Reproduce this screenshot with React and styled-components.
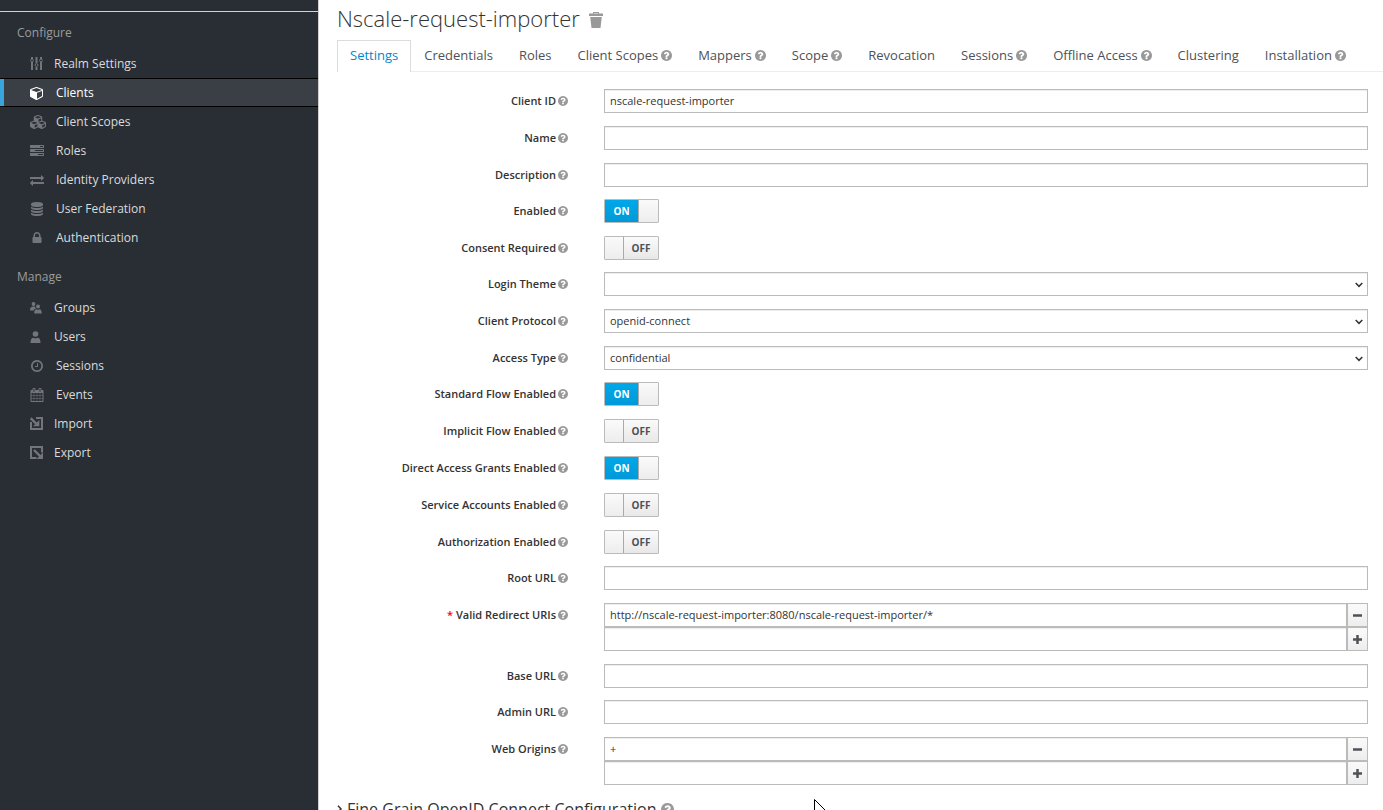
import { useState } from 'react';
import styled, { createGlobalStyle } from 'styled-components';
import { FaCubes } from 'react-icons/fa';

const ICONS = {
    cube: 'M896 1629l640-349v-636l-640 233v752zm-64-865l698-254-698-254-698 254zm832-252v768q0 35-18 65t-49 47l-704 384q-28 16-61 16t-61-16l-704-384q-31-17-49-47t-18-65v-768q0-40 23-73t61-47l704-256q22-8 44-8t44 8l704 256q38 14 61 47t23 73z',
    tasks: 'M1024 1408h640v-128h-640v128zm-384-512h1024v-128h-1024v128zm640-512h384v-128h-384v128zm512 832v256q0 26-19 45t-45 19h-1664q-26 0-45-19t-19-45v-256q0-26 19-45t45-19h1664q26 0 45 19t19 45zm0-512v256q0 26-19 45t-45 19h-1664q-26 0-45-19t-19-45v-256q0-26 19-45t45-19h1664q26 0 45 19t19 45zm0-512v256q0 26-19 45t-45 19h-1664q-26 0-45-19t-19-45v-256q0-26 19-45t45-19h1664q26 0 45 19t19 45z',
    exchange: 'M1792 1184v192q0 13-9.5 22.5t-22.5 9.5h-1376v192q0 13-9.5 22.5t-22.5 9.5q-12 0-24-10l-319-320q-9-9-9-22 0-14 9-23l320-320q9-9 23-9 13 0 22.5 9.5t9.5 22.5v192h1376q13 0 22.5 9.5t9.5 22.5zm0-544q0 14-9 23l-320 320q-9 9-23 9-13 0-22.5-9.5t-9.5-22.5v-192h-1376q-13 0-22.5-9.5t-9.5-22.5v-192q0-13 9.5-22.5t22.5-9.5h1376v-192q0-14 9-23t23-9q12 0 24 10l319 319q9 9 9 23z',
    database: 'M896 768q237 0 443-43t325-127v170q0 69-103 128t-280 93.5-385 34.5-385-34.5-280-93.5-103-128v-170q119 84 325 127t443 43zm0 768q237 0 443-43t325-127v170q0 69-103 128t-280 93.5-385 34.5-385-34.5-280-93.5-103-128v-170q119 84 325 127t443 43zm0-384q237 0 443-43t325-127v170q0 69-103 128t-280 93.5-385 34.5-385-34.5-280-93.5-103-128v-170q119 84 325 127t443 43zm0-1152q208 0 385 34.5t280 93.5 103 128v128q0 69-103 128t-280 93.5-385 34.5-385-34.5-280-93.5-103-128v-128q0-69 103-128t280-93.5 385-34.5z',
    lock: 'M640 768h512v-192q0-106-75-181t-181-75-181 75-75 181v192zm832 96v576q0 40-28 68t-68 28h-960q-40 0-68-28t-28-68v-576q0-40 28-68t68-28h32v-192q0-184 132-316t316-132 316 132 132 316v192h32q40 0 68 28t28 68z',
    clock: 'M1024 544v448q0 14-9 23t-23 9h-320q-14 0-23-9t-9-23v-64q0-14 9-23t23-9h224v-352q0-14 9-23t23-9h64q14 0 23 9t9 23zm416 352q0-148-73-273t-198-198-273-73-273 73-198 198-73 273 73 273 198 198 273 73 273-73 198-198 73-273zm224 0q0 209-103 385.5t-279.5 279.5-385.5 103-385.5-103-279.5-279.5-103-385.5 103-385.5 279.5-279.5 385.5-103 385.5 103 279.5 279.5 103 385.5z',
    calendar: 'M192 1664h288v-288h-288v288zm352 0h320v-288h-320v288zm-352-352h288v-320h-288v320zm352 0h320v-320h-320v320zm-352-384h288v-288h-288v288zm736 736h320v-288h-320v288zm-384-736h320v-288h-320v288zm768 736h288v-288h-288v288zm-384-352h320v-320h-320v320zm-352-864v-288q0-13-9.5-22.5t-22.5-9.5h-64q-13 0-22.5 9.5t-9.5 22.5v288q0 13 9.5 22.5t22.5 9.5h64q13 0 22.5-9.5t9.5-22.5zm736 864h288v-320h-288v320zm-384-384h320v-288h-320v288zm384 0h288v-288h-288v288zm32-480v-288q0-13-9.5-22.5t-22.5-9.5h-64q-13 0-22.5 9.5t-9.5 22.5v288q0 13 9.5 22.5t22.5 9.5h64q13 0 22.5-9.5t9.5-22.5zm384-64v1280q0 52-38 90t-90 38h-1408q-52 0-90-38t-38-90v-1280q0-52 38-90t90-38h128v-96q0-66 47-113t113-47h64q66 0 113 47t47 113v96h384v-96q0-66 47-113t113-47h64q66 0 113 47t47 113v96h128q52 0 90 38t38 90z',
    question: 'M1024 1376v-192q0-14-9-23t-23-9h-192q-14 0-23 9t-9 23v192q0 14 9 23t23 9h192q14 0 23-9t9-23zm256-672q0-88-55.5-163t-138.5-116-170-41q-243 0-371 213-15 24 8 42l132 100q7 6 19 6 16 0 25-12 53-68 86-92 34-24 86-24 48 0 85.5 26t37.5 59q0 38-20 61t-68 45q-63 28-115.5 86.5t-52.5 125.5v36q0 14 9 23t23 9h192q14 0 23-9t9-23q0-19 21.5-49.5t54.5-49.5q32-18 49-28.5t46-35 44.5-48 28-60.5 12.5-81zm384 192q0 209-103 385.5t-279.5 279.5-385.5 103-385.5-103-279.5-279.5-103-385.5 103-385.5 279.5-279.5 385.5-103 385.5 103 279.5 279.5 103 385.5z',
};

const Icon = ({ name, size = 14 }) => (
    <svg width={size} height={size} viewBox='0 0 1792 1792' fill='currentColor' aria-hidden='true'>
        <path d={ICONS[name]} />
    </svg>
);

const HelpIcon = ({ size = 10 }) => (
    <svg width={size} height={size} viewBox='128 128 1536 1536' fill='currentColor' aria-hidden='true'>
        <path d={ICONS.question} />
    </svg>
);

const SlidersIcon = () => (
    <svg width='13' height='13' viewBox='0 0 13 13' fill='none' stroke='currentColor' aria-hidden='true'>
        <path d='M2 0v2M2 5v8M6.500 0v6M6.500 10v3M11 0v2M11 5v8' strokeWidth='2' />
        <circle cx='2' cy='3.500' r='1.400' />
        <circle cx='6.500' cy='8' r='1.400' />
        <circle cx='11' cy='3.500' r='1.400' />
    </svg>
);

const GroupsIcon = () => (
    <svg width='12' height='12' viewBox='0 0 12 12' fill='currentColor' aria-hidden='true'>
        <circle cx='3.500' cy='2' r='1.900' />
        <circle cx='8' cy='4.500' r='2' />
        <path d='M0 8.500c0-2.500 1-4 3-4h2c.5 1.500.7 2 1 2.300C4.700 7 4 7.600 3.800 8.500z' />
        <path d='M4.200 11.500c0-2.800 1-4.300 2.600-4.300L8 8l1.200-.8c1.700 0 2.600 1.500 2.600 4.300z' />
    </svg>
);

const UserIcon = () => (
    <svg width='11' height='12' viewBox='0 0 11 12' fill='currentColor' aria-hidden='true'>
        <circle cx='5.500' cy='3' r='2.800' />
        <path d='M.5 12c0-3.500 1-5.300 3-5.300L5.500 7.500l2-.8c2 0 3 1.800 3 5.300z' />
    </svg>
);

const ImportIcon = () => (
    <svg width='13' height='13' viewBox='0 0 13 13' fill='none' stroke='currentColor' strokeWidth='2' aria-hidden='true'>
        <path d='M1 5v7h11V1H6' />
        <path d='M.7 1.200L7 7.500' strokeWidth='2.400' />
        <path d='M9.300 3v6.300H3z' fill='currentColor' stroke='none' />
    </svg>
);

const ExportIcon = () => (
    <svg width='13' height='13' viewBox='0 0 13 13' fill='none' stroke='currentColor' strokeWidth='2' aria-hidden='true'>
        <path d='M6.500 12H1V1h11v5.500' />
        <path d='M4 4l6.500 6.500' strokeWidth='2.400' />
        <path d='M13 6.500V13H6.500z' fill='currentColor' stroke='none' />
    </svg>
);

const TrashIcon = () => (
    <svg width='14' height='16' viewBox='0 0 14 16' fill='currentColor' aria-hidden='true'>
        <path d='M0 1.500h4V.5Q4 0 4.500 0h5Q10 0 10 .5v1h4V4H0zM5 1v.6h4V1zM1.200 5h11.600l-1.300 11h-9z' />
    </svg>
);

const CONFIGURE = [
    { label: 'Realm Settings', icon: <SlidersIcon />, indent: 24 },
    { label: 'Clients', icon: <Icon name='cube' />, indent: 26, active: true },
    { label: 'Client Scopes', icon: <FaCubes size={16} />, indent: 26 },
    { label: 'Roles', icon: <Icon name='tasks' />, indent: 26 },
    { label: 'Identity Providers', icon: <Icon name='exchange' />, indent: 26 },
    { label: 'User Federation', icon: <Icon name='database' />, indent: 26 },
    { label: 'Authentication', icon: <Icon name='lock' />, indent: 26 },
];

const MANAGE = [
    { label: 'Groups', icon: <GroupsIcon />, indent: 24 },
    { label: 'Users', icon: <UserIcon />, indent: 24 },
    { label: 'Sessions', icon: <Icon name='clock' />, indent: 26 },
    { label: 'Events', icon: <Icon name='calendar' />, indent: 26 },
    { label: 'Import', icon: <ImportIcon />, indent: 24 },
    { label: 'Export', icon: <ExportIcon />, indent: 24 },
];

const TABS = [
    { label: 'Settings', active: true },
    { label: 'Credentials' },
    { label: 'Roles' },
    { label: 'Client Scopes', help: true },
    { label: 'Mappers', help: true },
    { label: 'Scope', help: true },
    { label: 'Revocation' },
    { label: 'Sessions', help: true },
    { label: 'Offline Access', help: true },
    { label: 'Clustering' },
    { label: 'Installation', help: true },
];

const FIELD_GROUPS = [
    [
        { id: 'clientId', label: 'Client ID', type: 'text', value: 'nscale-request-importer' },
        { id: 'name', label: 'Name', type: 'text' },
        { id: 'description', label: 'Description', type: 'text' },
    ],
    [
        { id: 'enabled', label: 'Enabled', type: 'switch', value: true },
        { id: 'consent', label: 'Consent Required', type: 'switch' },
    ],
    [
        { id: 'loginTheme', label: 'Login Theme', type: 'select', options: [''] },
        { id: 'protocol', label: 'Client Protocol', type: 'select', options: ['openid-connect', 'saml'] },
        { id: 'accessType', label: 'Access Type', type: 'select', options: ['confidential', 'public', 'bearer-only'] },
    ],
    [
        { id: 'standardFlow', label: 'Standard Flow Enabled', type: 'switch', value: true },
        { id: 'implicitFlow', label: 'Implicit Flow Enabled', type: 'switch' },
        { id: 'directAccess', label: 'Direct Access Grants Enabled', type: 'switch', value: true },
        { id: 'serviceAccounts', label: 'Service Accounts Enabled', type: 'switch' },
        { id: 'authorization', label: 'Authorization Enabled', type: 'switch' },
    ],
    [
        { id: 'rootUrl', label: 'Root URL', type: 'text' },
        {
            id: 'redirectUris',
            label: 'Valid Redirect URIs',
            type: 'list',
            value: 'http://nscale-request-importer:8080/nscale-request-importer/*',
            required: true,
        },
        { id: 'baseUrl', label: 'Base URL', type: 'text' },
    ],
    [
        { id: 'adminUrl', label: 'Admin URL', type: 'text' },
        { id: 'webOrigins', label: 'Web Origins', type: 'list', value: '+' },
    ],
];

const Switch = ({ id, defaultOn }) => {
    const [on, setOn] = useState(!!defaultOn);

    return (
        <SwitchFrame>
            <SwitchInput id={id} type='checkbox' checked={on} onChange={() => setOn(!on)} />
            {on && <SwitchText $on>ON</SwitchText>}
            <SwitchHandle $on={on} />
            {!on && <SwitchText>OFF</SwitchText>}
        </SwitchFrame>
    );
};

const Select = ({ id, options }) => (
    <SelectWrap>
        <SelectBox id={id}>
            {options.map((option) => (
                <option key={option}>{option}</option>
            ))}
        </SelectBox>
        <SelectArrow width='8' height='6' viewBox='0 0 8 6' aria-hidden='true'>
            <path d='M.7.9L4 4.300 7.300.9' fill='none' stroke='#333' strokeWidth='1.500' />
        </SelectArrow>
    </SelectWrap>
);

const ListField = ({ id, label, value }) => (
    <div>
        <InputGroup>
            <TextInput id={id} type='text' defaultValue={value} />
            <AddonButton type='button' aria-label={`Remove from ${label}`}>
                <svg width='9' height='9' viewBox='0 0 9 9' aria-hidden='true'>
                    <path d='M0 4.500h9' stroke='currentColor' strokeWidth='2.500' />
                </svg>
            </AddonButton>
        </InputGroup>
        <InputGroup>
            <TextInput type='text' aria-label={`New entry for ${label}`} />
            <AddonButton type='button' aria-label={`Add to ${label}`}>
                <svg width='9' height='9' viewBox='0 0 9 9' aria-hidden='true'>
                    <path d='M0 4.500h9M4.500 0v9' stroke='currentColor' strokeWidth='2.500' />
                </svg>
            </AddonButton>
        </InputGroup>
    </div>
);

const Control = ({ field }) => {
    if (field.type === 'switch') return <Switch id={field.id} defaultOn={field.value} />;
    if (field.type === 'select') return <Select id={field.id} options={field.options} />;
    if (field.type === 'list') return <ListField id={field.id} label={field.label} value={field.value} />;
    return <TextInput id={field.id} type='text' defaultValue={field.value} />;
};

const NavSection = ({ title, items }) => (
    <Section>
        <SectionTitle>{title}</SectionTitle>
        <NavList>
            {items.map((item) => (
                <li key={item.label}>
                    <NavLink href='#' $active={item.active}>
                        <NavIcon $width={item.indent}>{item.icon}</NavIcon>
                        {item.label}
                    </NavLink>
                </li>
            ))}
        </NavList>
    </Section>
);

const App = () => (
    <>
        <GlobalStyle />
        <Shell>
            <Sidebar>
                <SidebarTop />
                <NavSection title='Configure' items={CONFIGURE} />
                <NavSection title='Manage' items={MANAGE} />
            </Sidebar>
            <Main>
                <Header>
                    <Title>Nscale-request-importer</Title>
                    <DeleteButton type='button' aria-label='Delete client'>
                        <TrashIcon />
                    </DeleteButton>
                </Header>
                <Tabs>
                    {TABS.map((tab) => (
                        <Tab key={tab.label} href='#' $active={tab.active}>
                            {tab.label}
                            {tab.help && <HelpIcon size={11} />}
                        </Tab>
                    ))}
                </Tabs>
                <Form>
                    {FIELD_GROUPS.map((group) => (
                        <FieldGroup key={group[0].id}>
                            {group.map((field) => (
                                <Row key={field.id}>
                                    <Label htmlFor={field.id}>
                                        <span>
                                            {field.required && <Required>* </Required>}
                                            {field.label}
                                        </span>
                                        <HelpIcon />
                                    </Label>
                                    <Control field={field} />
                                </Row>
                            ))}
                        </FieldGroup>
                    ))}
                    <Legend>
                        <svg width='5' height='8' viewBox='0 0 5 8' aria-hidden='true'>
                            <path d='M1 .7L4 4 1 7.300' fill='none' stroke='currentColor' strokeWidth='1.500' />
                        </svg>
                        Fine Grain OpenID Connect Configuration
                        <HelpIcon size={13} />
                    </Legend>
                </Form>
            </Main>
            <Pointer width='13' height='20' viewBox='0 0 13 20' aria-hidden='true'>
                <path d='M.5.5v16l4-4 2.500 6 2-1-2.500-5.500H12z' fill='#fff' stroke='#000' />
            </Pointer>
        </Shell>
    </>
);

export default App;

const GlobalStyle = createGlobalStyle`
    * {
        box-sizing: border-box;
    }

    body {
        margin: 0;
        background: #fff;
        color: #333;
        font-family: 'Open Sans', sans-serif;
        font-size: 11px;
    }

    button,
    input,
    select {
        font: inherit;
        color: inherit;
    }
`;

const Shell = styled.div`
    position: relative;
    display: flex;
    height: 100vh;
    overflow: hidden;
`;

const Sidebar = styled.nav`
    flex: 0 0 319px;
    background: #292e34;
    border-right: 1px solid #d1d1d1;
`;

const SidebarTop = styled.div`
    height: 12px;
    border-bottom: 1px solid #d1d1d1;
`;

const Section = styled.section`
    padding-top: 12px;
    margin-bottom: 4px;
`;

const SectionTitle = styled.h2`
    margin: 0 0 7px;
    padding-left: 17px;
    color: #9c9c9c;
    font-size: 12px;
    font-weight: 400;
    line-height: 18px;
`;

const NavList = styled.ul`
    margin: 0;
    padding: 0;
    list-style: none;
`;

const NavLink = styled.a`
    display: flex;
    align-items: center;
    height: 29px;
    padding-left: 30px;
    border: solid #000;
    border-width: ${({ $active }) => ($active ? '1px 0' : '0')};
    box-shadow: ${({ $active }) => ($active ? 'inset 4px 0 #39a5dc' : 'none')};
    background: ${({ $active }) => ($active ? '#393f45' : 'transparent')};
    color: ${({ $active }) => ($active ? '#fff' : '#dbdbdb')};
    font-size: 12px;
    text-decoration: none;

    svg {
        color: ${({ $active }) => ($active ? '#fff' : '#72767b')};
    }
`;

const NavIcon = styled.span`
    display: flex;
    flex: 0 0 ${({ $width }) => $width}px;
`;

const Main = styled.main`
    flex: 1;
    min-width: 0;
    padding-left: 18px;
`;

const Header = styled.header`
    display: flex;
    align-items: center;
    gap: 9px;
    height: 40px;
`;

const Title = styled.h1`
    margin: 0;
    padding-bottom: 4px;
    font-size: 22px;
    font-weight: 300;
    line-height: 36px;
`;

const DeleteButton = styled.button`
    display: flex;
    padding: 0;
    border: none;
    background: none;
    color: #999;
    cursor: pointer;
`;

const Tabs = styled.nav`
    display: flex;
    height: 32px;
    border-bottom: 1px solid #ededed;
`;

const Tab = styled.a`
    display: flex;
    align-items: center;
    gap: 3px;
    height: 32px;
    padding: 0 12px 3px;
    border: 1px solid ${({ $active }) => ($active ? '#dcdcdc' : 'transparent')};
    border-bottom: none;
    background: ${({ $active }) => ($active ? '#fff' : 'transparent')};
    color: ${({ $active }) => ($active ? '#0088ce' : '#4d5258')};
    font-size: 13px;
    text-decoration: none;
    white-space: nowrap;

    svg {
        color: #999;
    }
`;

const Form = styled.form`
    display: flex;
    flex-direction: column;
    gap: 12px;
    padding: 17px 15px 0 0;
`;

const FieldGroup = styled.div`
    display: flex;
    flex-direction: column;
    gap: 13px;
`;

const Row = styled.div`
    display: grid;
    grid-template-columns: 231px 1fr;
    column-gap: 36px;
    align-items: start;
`;

const Label = styled.label`
    display: flex;
    align-items: center;
    justify-content: flex-end;
    gap: 2px;
    height: 24px;
    padding-bottom: 1px;
    font-weight: 600;

    svg {
        color: #999;
    }
`;

const Required = styled.span`
    color: #f00;
`;

const TextInput = styled.input`
    display: block;
    width: 100%;
    min-width: 0;
    height: 24px;
    padding: 0 5px 1px;
    border: 1px solid #bbb;
    border-radius: 0;
    background: #fff;
    box-shadow: inset 0 1px 1px rgba(0, 0, 0, 0.075);
`;

const InputGroup = styled.div`
    display: flex;
`;

const AddonButton = styled.button`
    display: flex;
    flex: 0 0 21px;
    align-items: center;
    justify-content: center;
    height: 24px;
    padding: 0;
    border: 1px solid #bbb;
    background: linear-gradient(#fafafa, #ededed);
    color: #4d5258;
`;

const SelectWrap = styled.div`
    position: relative;
`;

const SelectBox = styled.select`
    display: block;
    width: 100%;
    height: 24px;
    padding: 0 5px 1px;
    border: 1px solid #bbb;
    border-radius: 0;
    background: #fff;
    box-shadow: inset 0 1px 1px rgba(0, 0, 0, 0.075);
    appearance: none;
`;

const SelectArrow = styled.svg`
    position: absolute;
    top: 10px;
    right: 5px;
    pointer-events: none;
`;

const SwitchFrame = styled.label`
    position: relative;
    display: flex;
    width: 55px;
    height: 24px;
    border: 1px solid #bbb;
    border-radius: 1px;
    cursor: pointer;
`;

const SwitchInput = styled.input`
    position: absolute;
    inset: 0;
    width: 100%;
    height: 100%;
    margin: 0;
    opacity: 0;
`;

const SwitchText = styled.span`
    flex: 1;
    background: ${({ $on }) => ($on ? 'linear-gradient(#00a8e9, #0099d8)' : 'linear-gradient(#fafafa, #e8e8e8)')};
    color: ${({ $on }) => ($on ? '#fff' : '#4d5258')};
    font-size: 10px;
    font-weight: 700;
    line-height: 22px;
    text-align: center;
`;

const SwitchHandle = styled.span`
    width: ${({ $on }) => ($on ? '20px' : '19px')};
    border: solid #aaa;
    border-width: ${({ $on }) => ($on ? '0 0 0 1px' : '0 1px 0 0')};
    background: linear-gradient(#fafafa, #ededed);
`;

const Legend = styled.h2`
    display: flex;
    align-items: center;
    gap: 5px;
    margin: 0;
    font-size: 16px;
    font-weight: 400;
    line-height: 24px;

    svg:last-child {
        color: #999;
    }
`;

const Pointer = styled.svg`
    position: absolute;
    top: 799px;
    left: 814px;
`;
